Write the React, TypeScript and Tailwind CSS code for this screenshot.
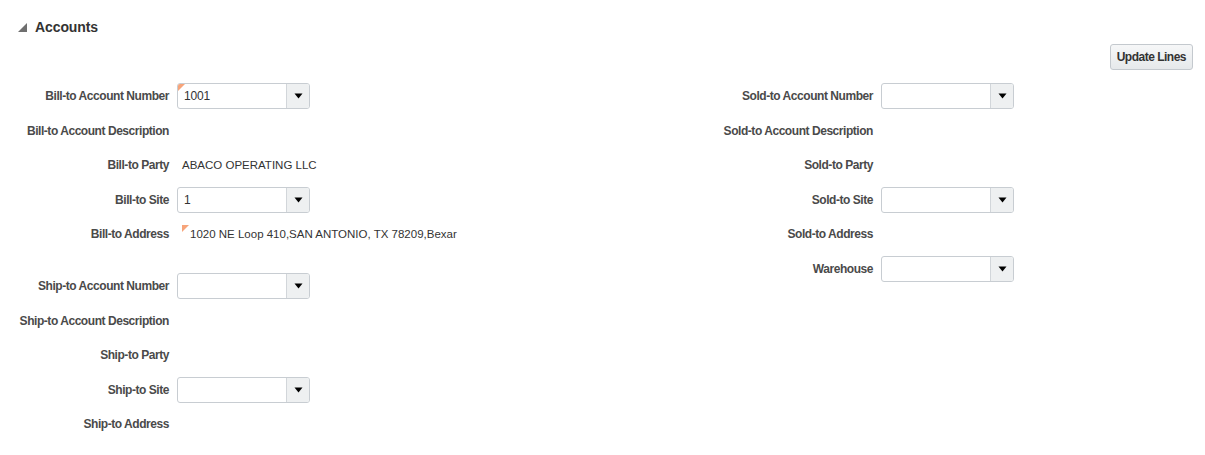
type Row =
  | { kind: 'select'; label: string; value?: string; changed?: boolean }
  | { kind: 'text'; label: string; value?: string; changed?: boolean }
  | { kind: 'gap' };

const leftRows: Row[] = [
  { kind: 'select', label: 'Bill-to Account Number', value: '1001', changed: true },
  { kind: 'text', label: 'Bill-to Account Description' },
  { kind: 'text', label: 'Bill-to Party', value: 'ABACO OPERATING LLC' },
  { kind: 'select', label: 'Bill-to Site', value: '1' },
  {
    kind: 'text',
    label: 'Bill-to Address',
    value: '1020 NE Loop 410,SAN ANTONIO, TX 78209,Bexar',
    changed: true,
  },
  { kind: 'gap' },
  { kind: 'select', label: 'Ship-to Account Number' },
  { kind: 'text', label: 'Ship-to Account Description' },
  { kind: 'text', label: 'Ship-to Party' },
  { kind: 'select', label: 'Ship-to Site' },
  { kind: 'text', label: 'Ship-to Address' },
];

const rightRows: Row[] = [
  { kind: 'select', label: 'Sold-to Account Number' },
  { kind: 'text', label: 'Sold-to Account Description' },
  { kind: 'text', label: 'Sold-to Party' },
  { kind: 'select', label: 'Sold-to Site' },
  { kind: 'text', label: 'Sold-to Address' },
  { kind: 'select', label: 'Warehouse' },
];

function ChangedMark() {
  return (
    <span className="absolute top-0 left-0 h-0 w-0 border-t-[7px] border-r-[7px] border-t-[#f7a47a] border-r-transparent" />
  );
}

function Select({ value, changed }: { value?: string; changed?: boolean }) {
  return (
    <div className="relative flex h-[26px] w-[133px] overflow-hidden rounded-[3px] border border-[#c8cdd2] bg-white">
      {changed && <ChangedMark />}
      <span className="flex flex-1 items-center pl-[6px] text-[12px] tracking-[-0.2px] text-[#333]">
        {value}
      </span>
      <span className="flex w-[23px] items-center justify-center border-l border-[#d2d6da] bg-[#eef0f1]">
        <svg width="9" height="6" viewBox="0 0 9 6">
          <path d="M0.5 0.5 L8.5 0.5 L4.5 5.5 Z" fill="#000" />
        </svg>
      </span>
    </div>
  );
}

function FormColumn({ rows, labelWidth }: { rows: Row[]; labelWidth: string }) {
  return (
    <div className="flex flex-col">
      {rows.map((row, i) => {
        if (row.kind === 'gap') return <div key={i} className="h-[17.5px]" />;
        return (
          <div key={i} className="flex h-[34.5px] items-center">
            <span
              className={`${labelWidth} shrink-0 pr-[8px] text-right text-[12px] font-bold tracking-[-0.45px] whitespace-nowrap text-[#4a4a4a]`}
            >
              {row.label}
            </span>
            {row.kind === 'select' ? (
              <Select value={row.value} changed={row.changed} />
            ) : (
              <span className="relative pl-[5px] text-[11.5px] whitespace-nowrap text-[#333]">
                {row.changed && (
                  <span className="absolute top-[-1px] left-[5px] h-0 w-0 border-t-[7px] border-r-[7px] border-t-[#f7a47a] border-r-transparent" />
                )}
                <span className={row.changed ? 'pl-[8px]' : ''}>{row.value}</span>
              </span>
            )}
          </div>
        );
      })}
    </div>
  );
}

export default function App() {
  return (
    <div className="h-[455px] w-[1205px] bg-white font-['Liberation_Sans',Arial,sans-serif]">
      <div className="flex items-center gap-[8px] pt-[19px] pl-[18px]">
        <svg width="9" height="9" viewBox="0 0 9 9">
          <path d="M9 0 L9 9 L0 9 Z" fill="#6f6f6f" />
        </svg>
        <h2 className="text-[14px] leading-[16px] font-bold tracking-[-0.1px] text-[#333]">
          Accounts
        </h2>
      </div>

      <div className="flex justify-end pt-[9px] pr-[12px]">
        <button
          type="button"
          className="h-[26px] rounded-[3px] border border-[#c4c9ce] bg-gradient-to-b from-[#f6f7f8] to-[#e6e9eb] px-[6px] text-[12px] font-bold tracking-[-0.5px] text-[#333]"
        >
          Update Lines
        </button>
      </div>

      <div className="flex pt-[9px]">
        <div className="w-[700px]">
          <FormColumn rows={leftRows} labelWidth="w-[177px]" />
        </div>
        <div>
          <FormColumn rows={rightRows} labelWidth="w-[181px]" />
        </div>
      </div>
    </div>
  );
}
